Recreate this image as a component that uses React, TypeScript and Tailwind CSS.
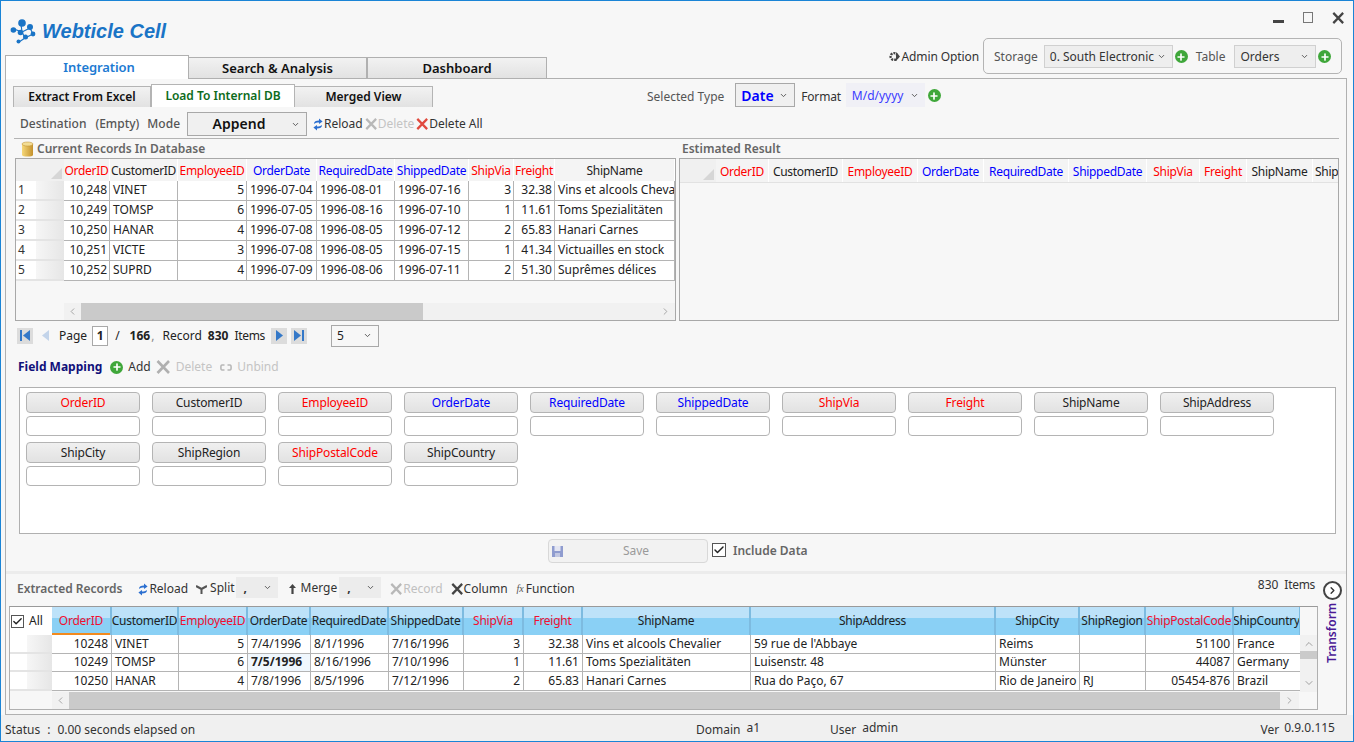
import { ChevronDown, ChevronLeft, ChevronRight, ChevronUp, Check, Plus } from "lucide-react";

const RED = "text-[#ff0000]";
const BLUE = "text-[#0000ff]";
const BLACK = "text-[#222]";

type Col = { name: string; w: number; tone: string; align?: string };

const dbCols: Col[] = [
  { name: "OrderID", w: 46, tone: RED, align: "text-right" },
  { name: "CustomerID", w: 68, tone: BLACK },
  { name: "EmployeeID", w: 69, tone: RED, align: "text-right" },
  { name: "OrderDate", w: 70, tone: BLUE },
  { name: "RequiredDate", w: 78, tone: BLUE },
  { name: "ShippedDate", w: 74, tone: BLUE },
  { name: "ShipVia", w: 45, tone: RED, align: "text-right" },
  { name: "Freight", w: 41, tone: RED, align: "text-right" },
  { name: "ShipName", w: 120, tone: BLACK },
];

const dbRows = [
  ["10,248", "VINET", "5", "1996-07-04", "1996-08-01", "1996-07-16", "3", "32.38", "Vins et alcools Chevalier"],
  ["10,249", "TOMSP", "6", "1996-07-05", "1996-08-16", "1996-07-10", "1", "11.61", "Toms Spezialitäten"],
  ["10,250", "HANAR", "4", "1996-07-08", "1996-08-05", "1996-07-12", "2", "65.83", "Hanari Carnes"],
  ["10,251", "VICTE", "3", "1996-07-08", "1996-08-05", "1996-07-15", "1", "41.34", "Victuailles en stock"],
  ["10,252", "SUPRD", "4", "1996-07-09", "1996-08-06", "1996-07-11", "2", "51.30", "Suprêmes délices"],
];

const estCols: Col[] = [
  { name: "OrderID", w: 53, tone: RED },
  { name: "CustomerID", w: 74, tone: BLACK },
  { name: "EmployeeID", w: 75, tone: RED },
  { name: "OrderDate", w: 66, tone: BLUE },
  { name: "RequiredDate", w: 85, tone: BLUE },
  { name: "ShippedDate", w: 78, tone: BLUE },
  { name: "ShipVia", w: 53, tone: RED },
  { name: "Freight", w: 47, tone: RED },
  { name: "ShipName", w: 66, tone: BLACK },
  { name: "ShipAddress", w: 40, tone: BLACK },
];

const extCols: Col[] = [
  { name: "OrderID", w: 60, tone: "text-[#f01030]", align: "text-right" },
  { name: "CustomerID", w: 67, tone: BLACK },
  { name: "EmployeeID", w: 69, tone: "text-[#f01030]", align: "text-right" },
  { name: "OrderDate", w: 63, tone: BLACK },
  { name: "RequiredDate", w: 78, tone: BLACK },
  { name: "ShippedDate", w: 75, tone: BLACK },
  { name: "ShipVia", w: 60, tone: "text-[#f01030]", align: "text-right" },
  { name: "Freight", w: 59, tone: "text-[#f01030]", align: "text-right" },
  { name: "ShipName", w: 168, tone: BLACK },
  { name: "ShipAddress", w: 245, tone: BLACK },
  { name: "ShipCity", w: 84, tone: BLACK },
  { name: "ShipRegion", w: 66, tone: BLACK },
  { name: "ShipPostalCode", w: 88, tone: "text-[#f01030]", align: "text-right" },
  { name: "ShipCountry", w: 67, tone: BLACK },
];

const extRows = [
  ["10248", "VINET", "5", "7/4/1996", "8/1/1996", "7/16/1996", "3", "32.38", "Vins et alcools Chevalier", "59 rue de l'Abbaye", "Reims", "", "51100", "France"],
  ["10249", "TOMSP", "6", "7/5/1996", "8/16/1996", "7/10/1996", "1", "11.61", "Toms Spezialitäten", "Luisenstr. 48", "Münster", "", "44087", "Germany"],
  ["10250", "HANAR", "4", "7/8/1996", "8/5/1996", "7/12/1996", "2", "65.83", "Hanari Carnes", "Rua do Paço, 67", "Rio de Janeiro", "RJ", "05454-876", "Brazil"],
];

const fields: [string, string][] = [
  ["OrderID", RED], ["CustomerID", BLACK], ["EmployeeID", RED], ["OrderDate", BLUE], ["RequiredDate", BLUE],
  ["ShippedDate", BLUE], ["ShipVia", RED], ["Freight", RED], ["ShipName", BLACK], ["ShipAddress", BLACK],
  ["ShipCity", BLACK], ["ShipRegion", BLACK], ["ShipPostalCode", RED], ["ShipCountry", BLACK],
];

function PlusDot() {
  return (
    <span className="flex h-[13px] w-[13px] shrink-0 items-center justify-center rounded-full bg-[#3fa73a]">
      <Plus size={10} strokeWidth={4} className="text-white" />
    </span>
  );
}

function XIcon({ color, size = 14 }: { color: string; size?: number }) {
  return (
    <svg width={size} height={size} viewBox="0 0 14 14" className="shrink-0">
      <path d="M1.5 1 L13 13 M13 1 L1.5 13" stroke={color} strokeWidth="2.6" />
    </svg>
  );
}

function ReloadIcon() {
  return (
    <svg width="10" height="13" viewBox="0 0 10 13" className="shrink-0">
      <path d="M1 6 C1 3.4 3 2.5 6 2.5 L6 0.5 L9.6 3.4 L6 6 L6 4.4 C4 4.4 2.6 4.7 1 6 Z" fill="#2b6fd0" />
      <path d="M9 7 C9 9.6 7 10.5 4 10.5 L4 12.5 L0.4 9.6 L4 7 L4 8.6 C6 8.6 7.4 8.3 9 7 Z" fill="#2b6fd0" />
    </svg>
  );
}

function Triangle({ dir, color }: { dir: "left" | "right"; color: string }) {
  return (
    <svg width="7" height="11" viewBox="0 0 7 11">
      <path d={dir === "left" ? "M7 0 L0 5.5 L7 11 Z" : "M0 0 L7 5.5 L0 11 Z"} fill={color} />
    </svg>
  );
}

function PagerBtn({ dir, edge, faded }: { dir: "left" | "right"; edge?: boolean; faded?: boolean }) {
  const color = faded ? "#c3d4ea" : "#3478c8";
  return (
    <span className={`flex h-4 w-4 items-center justify-center gap-px ${faded ? "" : "bg-[#dcdcdc]"}`}>
      {edge && dir === "left" && <span className="h-[11px] w-[2px] bg-[#3478c8]" />}
      <Triangle dir={dir} color={color} />
      {edge && dir === "right" && <span className="h-[11px] w-[2px] bg-[#3478c8]" />}
    </span>
  );
}

function HeaderCorner() {
  return (
    <svg width="12" height="12" viewBox="0 0 12 12" className="absolute bottom-[1px] right-[1px]">
      <path d="M11 0 L11 11 L0 11 Z" fill="#d6d6d6" />
    </svg>
  );
}

function HScroll({ offset, arrowPad, thumb }: { offset: number; arrowPad: number; thumb: number }) {
  return (
    <div className="flex h-[17px] shrink-0" style={{ paddingLeft: offset }}>
      <div className="flex min-w-0 flex-1 items-center bg-[#f1f1f1]">
        <span className="flex h-full shrink-0 items-center justify-center" style={{ width: arrowPad }}>
          <ChevronLeft size={11} className="text-[#a0a0a0]" />
        </span>
        <span className="h-full bg-[#cacaca]" style={{ width: thumb }} />
        <span className="flex-1" />
        <span className="flex h-full w-[19px] shrink-0 items-center justify-center">
          <ChevronRight size={11} className="text-[#a0a0a0]" />
        </span>
      </div>
    </div>
  );
}

function FakeSelect({
  label,
  width,
  height,
  className = "",
  labelClass = "",
}: {
  label: string;
  width: number;
  height: number;
  className?: string;
  labelClass?: string;
}) {
  return (
    <span
      className={`flex shrink-0 items-center justify-between pr-[6px] ${className}`}
      style={{ width, height }}
    >
      <span className={labelClass}>{label}</span>
      <ChevronDown size={9} strokeWidth={2.5} className="text-[#555]" />
    </span>
  );
}

function CurrentRecords() {
  return (
    <div className="flex h-[163px] flex-col border border-[#a8a8a8] bg-[#f7f7f7]">
      <div className="flex h-[22px] shrink-0 overflow-hidden">
        <div className="relative h-full w-[48px] shrink-0 bg-[#f0f0f0]">
          <HeaderCorner />
        </div>
        {dbCols.map((c) => (
          <div
            key={c.name}
            className={`flex shrink-0 items-center justify-center overflow-hidden whitespace-nowrap border-r border-white bg-[#f4f4f4] pt-[2px] tracking-[-0.3px] ${c.tone}`}
            style={{ width: c.w }}
          >
            {c.name}
          </div>
        ))}
      </div>
      {dbRows.map((row, i) => (
        <div key={row[0]} className="flex h-5 shrink-0 overflow-hidden">
          <div className="flex w-[48px] shrink-0 border-b-2 border-[#e4e4e4] bg-white">
            <span className="flex w-[20px] items-center pl-[2px] text-[#333]">{i + 1}</span>
            <span className="flex-1 bg-gradient-to-r from-[#f6f6f6] to-[#e6e6e6]" />
          </div>
          {row.map((v, j) => (
            <div
              key={j}
              className={`flex shrink-0 items-center overflow-hidden whitespace-nowrap border-b border-r border-[#b4b4b4] bg-white pb-px pl-[3px] pr-[2px] text-[#222] ${
                dbCols[j].align ? "justify-end" : ""
              }`}
              style={{ width: dbCols[j].w }}
            >
              {v}
            </div>
          ))}
        </div>
      ))}
      <div className="flex-1" />
      <HScroll offset={48} arrowPad={17} thumb={342} />
    </div>
  );
}

function EstimatedGrid() {
  return (
    <div className="h-[163px] border border-[#a8a8a8] bg-[#f7f7f7]">
      <div className="flex h-[24px] overflow-hidden border-b border-[#e2e2e2]">
        <div className="relative h-full w-[36px] shrink-0 bg-[#f0f0f0]">
          <HeaderCorner />
        </div>
        {estCols.map((c) => (
          <div
            key={c.name}
            className={`flex shrink-0 items-center justify-center overflow-hidden whitespace-nowrap border-r border-white bg-[#f4f4f4] pt-[2px] tracking-[-0.3px] ${c.tone} ${
              c.name === "ShipAddress" ? "justify-start pl-[2px]" : ""
            }`}
            style={{ width: c.w }}
          >
            {c.name}
          </div>
        ))}
      </div>
    </div>
  );
}

function FieldSlot({ name, tone }: { name: string; tone: string }) {
  return (
    <div className="flex w-[114px] flex-col gap-[3px]">
      <div
        className={`flex h-[21px] items-center justify-center rounded-[4px] border border-[#b4b4b4] bg-gradient-to-b from-[#f0f0f0] to-[#e2e2e2] tracking-[-0.15px] ${tone}`}
      >
        {name}
      </div>
      <div className="h-[20px] rounded-[4px] border border-[#b4b4b4] bg-white" />
    </div>
  );
}

function ExtractedGrid() {
  return (
    <div className="ml-[3px] flex h-[104px] w-[1309px] flex-col border border-[#b0b0b0] border-t-[#9a9a9a] bg-[#f7f7f7]">
      <div className="flex h-[85px] shrink-0">
        <div className="w-[1290px] shrink-0 overflow-hidden">
          <div className="flex h-[28px]">
            <div className="flex w-[42px] shrink-0 items-center gap-[5px] bg-white pl-[1px] text-[#222]">
              <span className="flex h-[13px] w-[13px] items-center justify-center border border-[#555] bg-white">
                <Check size={11} strokeWidth={3} className="text-[#222]" />
              </span>
              All
            </div>
            {extCols.map((c) => (
              <div
                key={c.name}
                className={`flex shrink-0 items-center justify-center overflow-hidden whitespace-nowrap border-r-2 border-[#7dbbe0] bg-[linear-gradient(#bde2f9_0,#bde2f9_40%,#8ad0f5_40%,#8ad0f5_100%)] tracking-[-0.25px] ${c.tone} ${
                  c.name === "OrderID" ? "shadow-[inset_0_-2px_0_#f28a1e]" : ""
                }`}
                style={{ width: c.w }}
              >
                {c.name}
              </div>
            ))}
          </div>
          {extRows.map((row, i) => (
            <div key={row[0]} className="flex h-[18.6px] overflow-hidden">
              <div className="flex w-[42px] shrink-0 border-b-2 border-[#e4e4e4] bg-white">
                <span className="w-[17px]" />
                <span className="flex-1 bg-gradient-to-r from-[#f6f6f6] to-[#e6e6e6]" />
              </div>
              {row.map((v, j) => (
                <div
                  key={j}
                  className={`flex shrink-0 items-center overflow-hidden whitespace-nowrap border-b border-r border-[#b4b4b4] px-[3px] text-[#222] ${
                    extCols[j].align ? "justify-end" : ""
                  } ${i === 1 && j === 3 ? "bg-[#f0f7fd] font-bold" : "bg-white"}`}
                  style={{ width: extCols[j].w }}
                >
                  {v}
                </div>
              ))}
            </div>
          ))}
        </div>
        <div className="flex w-[17px] shrink-0 flex-col pt-[28px]">
          <div className="flex flex-1 flex-col items-center bg-[#f1f1f1]">
            <ChevronUp size={12} className="mt-[3px] text-[#a0a0a0]" />
            <span className="mt-[1px] h-2 w-full bg-[#cacaca]" />
            <span className="flex-1" />
            <ChevronDown size={12} className="mb-[3px] text-[#a0a0a0]" />
          </div>
        </div>
      </div>
      <div className="mr-[18px]">
        <HScroll offset={42} arrowPad={17} thumb={1211} />
      </div>
    </div>
  );
}

export default function App() {
  return (
    <div className="flex h-[742px] w-[1354px] flex-col overflow-hidden border border-[#1a84d6] bg-[#f7f7f7] font-['Noto_Sans','Malgun_Gothic',sans-serif] text-[12px] leading-none text-[#333]">
      {/* title bar and main tabs */}
      <header className="flex h-[77px] shrink-0 justify-between">
        <div className="flex flex-col pl-[4px]">
          <div className="flex h-[54px] items-center gap-[5px] pl-[5px] pt-[6px]">
            <svg width="26" height="25" viewBox="0 0 26 25" className="mr-px">
              <g fill="#1a74c6">
                <path d="M11 5 L12 13 L4 10 M12 13 L20 9 L23 15 L15 19 L9 23 M12 13 L15 19" stroke="#1a74c6" strokeWidth="1.2" fill="none" />
                <circle cx="12" cy="4" r="3.8" />
                <circle cx="3.4" cy="11" r="2.8" />
                <circle cx="10.5" cy="13.5" r="2.8" />
                <circle cx="20" cy="8" r="3" />
                <circle cx="23" cy="15" r="2.4" />
                <circle cx="15.5" cy="18" r="2.5" />
                <circle cx="8.5" cy="22.5" r="2" />
              </g>
            </svg>
            <span className="font-['Liberation_Sans',sans-serif] text-[20px] font-bold italic text-[#1a74c6]">
              Webticle Cell
            </span>
          </div>
          <div className="flex h-[23px] items-end">
            <div className="relative z-10 -mb-px flex h-[24px] w-[184px] items-center justify-center border border-b-0 border-[#b0b0b0] bg-white pl-[4px] text-[13px] font-semibold tracking-[-0.1px] text-[#1c7ad2]">
              Integration
            </div>
            <div className="flex h-[21px] w-[179px] items-center justify-center border-r-2 border-t border-[#b0b0b0] bg-gradient-to-b from-[#f2f2f2] to-[#e2e2e2] text-[13px] font-semibold text-[#111]">
              Search &amp; Analysis
            </div>
            <div className="flex h-[21px] w-[179px] items-center justify-center border-r border-t border-[#b0b0b0] bg-gradient-to-b from-[#f2f2f2] to-[#e2e2e2] text-[13px] font-semibold text-[#111]">
              Dashboard
            </div>
          </div>
        </div>
        <div className="flex flex-col items-end pr-[11px]">
          <div className="-mr-[6px] flex h-[37px] items-start gap-[19px] pr-[4px] pt-[11px]">
            <span className="mt-[8px] h-[2.5px] w-[11px] bg-[#444]" />
            <span className="h-[11px] w-[10px] border border-[#777]" />
            <XIcon color="#444" size={12} />
          </div>
          <div className="flex items-center">
            <svg width="11" height="13" viewBox="0 0 11 13" className="mr-[1px]">
              <circle cx="5" cy="6.5" r="3.4" fill="none" stroke="#444" strokeWidth="2.4" strokeDasharray="2 1" />
              <path d="M7 2 L11 6.5 L7 11 Z" fill="#444" />
            </svg>
            <span className="mr-[4px] pt-px tracking-[-0.1px] text-[#333]">Admin Option</span>
            <div className="flex h-[36px] w-[359px] items-center rounded-[5px] border border-[#b4b4b4] pl-[10px] pt-px">
              <span className="mr-[6px] text-[#555]">Storage</span>
              <FakeSelect
                label="0. South Electronic"
                width={129}
                height={23}
                className="border border-[#d0d0d0] bg-[#eeeeee] pl-[5px]"
              />
              <span className="ml-[2px]">
                <PlusDot />
              </span>
              <span className="ml-[8px] mr-[9px] text-[#555]">Table</span>
              <FakeSelect
                label="Orders"
                width={82}
                height={23}
                className="border border-[#d0d0d0] bg-[#eeeeee] pl-[5px]"
              />
              <span className="ml-[2px]">
                <PlusDot />
              </span>
            </div>
          </div>
        </div>
      </header>

      {/* main panel */}
      <main className="ml-[4px] h-[637px] w-[1342px] shrink-0 border border-b border-[#b0b0b0] bg-[#f7f7f7]">
        {/* sub tabs and type selector */}
        <div className="mt-[5px] flex h-[23px] items-end pl-[7px]">
          <div className="flex h-[21px] w-[138px] items-center justify-center border border-b-0 border-[#b4b4b4] bg-gradient-to-b from-[#f2f2f2] to-[#e2e2e2] font-semibold text-[#111]">
            Extract From Excel
          </div>
          <div className="flex h-[23px] w-[144px] items-center justify-center border-x border-t border-[#b4b4b4] bg-white font-semibold text-[#0d6b20]">
            Load To Internal DB
          </div>
          <div className="flex h-[21px] w-[138px] items-center justify-center border-r border-t border-[#b4b4b4] bg-gradient-to-b from-[#f2f2f2] to-[#e2e2e2] font-semibold text-[#111]">
            Merged View
          </div>
          <div className="ml-[214px] flex h-[24px] items-center">
            <span className="mr-[11px] pt-[3px] text-[#555]">Selected Type</span>
            <FakeSelect
              label="Date"
              width={60}
              height={24}
              className="border border-[#a8a8a8] bg-[#f0f0f0] pl-[5px]"
              labelClass="pt-px text-[14px] font-semibold text-[#0000ff]"
            />
            <span className="ml-[6px] mr-[5px] pt-[3px] tracking-[-0.2px] text-[#333]">Format</span>
            <FakeSelect
              label="M/d/yyyy"
              width={79}
              height={24}
              className="bg-[#f0f0f6] pl-[6px]"
              labelClass="pt-px text-[#3b3bff]"
            />
            <span className="ml-[3px] mt-px">
              <PlusDot />
            </span>
          </div>
        </div>

        {/* destination toolbar */}
        <div className="mt-[4px] flex h-[25px] items-center pl-[14px] pt-px">
          <span className="mr-[9px] font-medium text-[#555]">Destination</span>
          <span className="mr-[8px] font-medium text-[#555]">(Empty)</span>
          <span className="mr-[7px] font-medium text-[#555]">Mode</span>
          <span className="relative flex h-[24px] w-[120px] items-center justify-center border border-[#a8a8a8] bg-[#f0f0f0] pr-[16px] text-[14px] font-semibold text-[#111]">
            Append
            <ChevronDown size={9} strokeWidth={2.5} className="absolute right-[6px] top-[7px] text-[#555]" />
          </span>
          <span className="ml-[6px] flex items-center gap-px">
            <ReloadIcon />
            <span className="text-[#333]">Reload</span>
          </span>
          <span className="ml-[2px] flex items-center gap-px text-[#c4c4c4]">
            <XIcon color="#b8b8b8" size={12} />
            Delete
          </span>
          <span className="ml-[2px] flex items-center gap-px text-[#333]">
            <XIcon color="#e04a3e" size={12} />
            Delete All
          </span>
        </div>

        <div className="ml-[8px] mr-[7px] mt-[2px] border-t border-[#b4b4b4]" />

        {/* current records and estimated result */}
        <div className="flex pl-[9px] pr-[7px]">
          <div className="w-[661px] shrink-0">
            <div className="flex h-[19px] items-center gap-[3px] pl-[6px] font-semibold text-[#666]">
              <svg width="13" height="16" viewBox="0 0 13 16">
                <defs>
                  <linearGradient id="can" x1="0" x2="1" y1="0" y2="0">
                    <stop offset="0" stopColor="#f6d879" />
                    <stop offset="1" stopColor="#c4912c" />
                  </linearGradient>
                </defs>
                <path d="M1 3 L1 14 C1 16 12 16 12 14 L12 3 Z" fill="url(#can)" />
                <ellipse cx="6.5" cy="3" rx="5.5" ry="2" fill="#f3dd94" stroke="#b9892d" strokeWidth="0.5" />
              </svg>
              Current Records In Database
            </div>
            <CurrentRecords />
          </div>
          <div className="ml-[3px] min-w-0 flex-1">
            <div className="flex h-[19px] items-center pl-[3px] font-semibold text-[#666]">Estimated Result</div>
            <EstimatedGrid />
          </div>
        </div>

        {/* pager */}
        <div className="flex h-[26px] items-center pl-[11px] pt-[3px]">
          <PagerBtn dir="left" edge />
          <span className="ml-[4px]">
            <PagerBtn dir="left" faded />
          </span>
          <span className="ml-[6px] text-[#222]">Page</span>
          <span className="ml-[5px] flex h-[20px] w-[16px] items-center justify-center border border-[#a8a8a8] bg-white font-bold text-[#222]">
            1
          </span>
          <span className="ml-[7px] text-[#222]">/</span>
          <span className="ml-[10px] font-bold text-[#222]">166</span>
          <span className="ml-px text-[#888]">,</span>
          <span className="ml-[8px] text-[#222]">Record</span>
          <span className="ml-[6px] font-bold text-[#222]">830</span>
          <span className="ml-[6px] tracking-[-0.3px] text-[#222]">Items</span>
          <span className="ml-[6px]">
            <PagerBtn dir="right" />
          </span>
          <span className="ml-[4px]">
            <PagerBtn dir="right" edge />
          </span>
          <span className="ml-[24px]">
            <FakeSelect label="5" width={48} height={22} className="border border-[#a8a8a8] pl-[5px] text-[#222]" />
          </span>
        </div>

        {/* field mapping toolbar */}
        <div className="flex h-[40px] items-center pl-[12px]">
          <span className="mr-[8px] font-bold text-[#10107a]">Field Mapping</span>
          <PlusDot />
          <span className="ml-[5px] mr-[5px] text-[#333]">Add</span>
          <XIcon color="#b0b0b0" />
          <span className="ml-[6px] mr-[8px] text-[#c4c4c4]">Delete</span>
          <svg width="12" height="7" viewBox="0 0 12 7" className="mr-[5px]">
            <path d="M4.5 1 H2 C0.5 1 0.5 6 2 6 H4.5 M7.5 1 H10 C11.5 1 11.5 6 10 6 H7.5" fill="none" stroke="#b8b8b8" strokeWidth="1.6" />
          </svg>
          <span className="text-[#c4c4c4]">Unbind</span>
        </div>

        {/* field mapping slots */}
        <div className="ml-[13px] flex h-[147px] w-[1317px] flex-wrap content-start gap-x-[12px] gap-y-[6px] border border-[#b0b0b0] bg-white pl-[6px] pt-[4px]">
          {fields.map(([name, tone]) => (
            <FieldSlot key={name} name={name} tone={tone} />
          ))}
        </div>

        {/* save */}
        <div className="flex h-[37px] items-center pb-[3px] pl-[542px]">
          <div className="flex h-[24px] w-[160px] items-center rounded-[4px] border border-[#d8d8d8] bg-[#f2f2f2] pl-[3px]">
            <svg width="11" height="11" viewBox="0 0 11 11">
              <path d="M0 0 H11 V11 H0 Z" fill="#8f9ccf" />
              <path d="M2.5 0 H8.5 V5 H2.5 Z" fill="#e4e6f2" />
              <path d="M3 7 H8 V11 H3 Z" fill="#c2c8e2" />
            </svg>
            <span className="flex-1 pl-[2px] text-center text-[#9a9a9a]">Save</span>
          </div>
          <span className="mb-[3px] ml-[4px] flex h-[14px] w-[14px] items-center justify-center border border-[#555] bg-white">
            <Check size={12} strokeWidth={3} className="text-[#222]" />
          </span>
          <span className="ml-[7px] font-semibold text-[#666]">Include Data</span>
        </div>

        <div className="h-[3px] bg-[#ececec]" />

        {/* extracted records */}
        <div className="flex h-[32px] items-center pb-[2px] pl-[11px] pr-[4px]">
          <span className="mr-[16px] font-semibold text-[#666]">Extracted Records</span>
          <ReloadIcon />
          <span className="ml-[1px] mr-[8px] text-[#333]">Reload</span>
          <svg width="11" height="9" viewBox="0 0 11 9" className="mr-[3px]">
            <path d="M0 1 L5.5 4 L11 1 M5.5 4 V9" fill="none" stroke="#555" strokeWidth="2" />
          </svg>
          <span className="mb-[3px] mr-[1px] text-[#333]">Split</span>
          <FakeSelect label="," width={42} height={21} className="mb-[3px] bg-[#ececec] pl-[8px]" labelClass="font-bold" />
          <svg width="9" height="12" viewBox="0 0 9 12" className="ml-[10px] mr-[4px]">
            <path d="M4.5 1 L1 5 H3.4 V11 H5.6 V5 H8 Z" fill="#444" />
          </svg>
          <span className="mb-[3px] mr-[2px] text-[#333]">Merge</span>
          <FakeSelect label="," width={42} height={21} className="mb-[3px] bg-[#ececec] pl-[8px]" labelClass="font-bold" />
          <span className="ml-[9px] flex items-center gap-px text-[#c0c0c0]">
            <XIcon color="#b8b8b8" size={12} />
            Record
          </span>
          <span className="ml-[8px] flex items-center gap-px text-[#333]">
            <XIcon color="#444" size={12} />
            Column
          </span>
          <span className="ml-[9px] flex items-center gap-[2px] text-[#333]">
            <span className="font-['Liberation_Serif',serif] text-[10px] italic text-[#555]">fx</span>
            Function
          </span>
          <span className="ml-auto flex items-center self-start pt-[5px]">
            <span className="mb-[10px] mr-[6px] text-[#333]">830</span>
            <span className="mb-[10px] mr-[8px] tracking-[-0.3px] text-[#333]">Items</span>
            <span className="flex h-[19px] w-[19px] items-center justify-center rounded-full border-2 border-[#444] bg-white">
              <ChevronRight size={11} strokeWidth={3} className="text-[#333]" />
            </span>
          </span>
        </div>

        <div className="flex">
          <ExtractedGrid />
          <span className="ml-[8px] -mt-[3px] h-[60px] rotate-180 text-center font-semibold text-[#4b1a96] [writing-mode:vertical-rl]">
            Transform
          </span>
        </div>
      </main>

      {/* status bar */}
      <footer className="grid h-[26px] shrink-0 grid-cols-[691px_134px_1fr_auto] items-center bg-[#f0f0f0] pl-[4px] pr-[18px] pt-[3px] text-[#333]">
        <span className="flex gap-[7px]">
          <span>Status</span>
          <span>:</span>
          <span>0.00 seconds elapsed on</span>
        </span>
        <span className="flex items-center gap-[6px]">
          <span>Domain</span>
          <span className="mb-[3px]">a1</span>
        </span>
        <span className="flex items-center gap-[6px]">
          <span>User</span>
          <span className="mb-[3px]">admin</span>
        </span>
        <span className="flex items-center gap-[5px]">
          <span>Ver</span>
          <span className="mb-[3px]">0.9.0.115</span>
        </span>
      </footer>
    </div>
  );
}
